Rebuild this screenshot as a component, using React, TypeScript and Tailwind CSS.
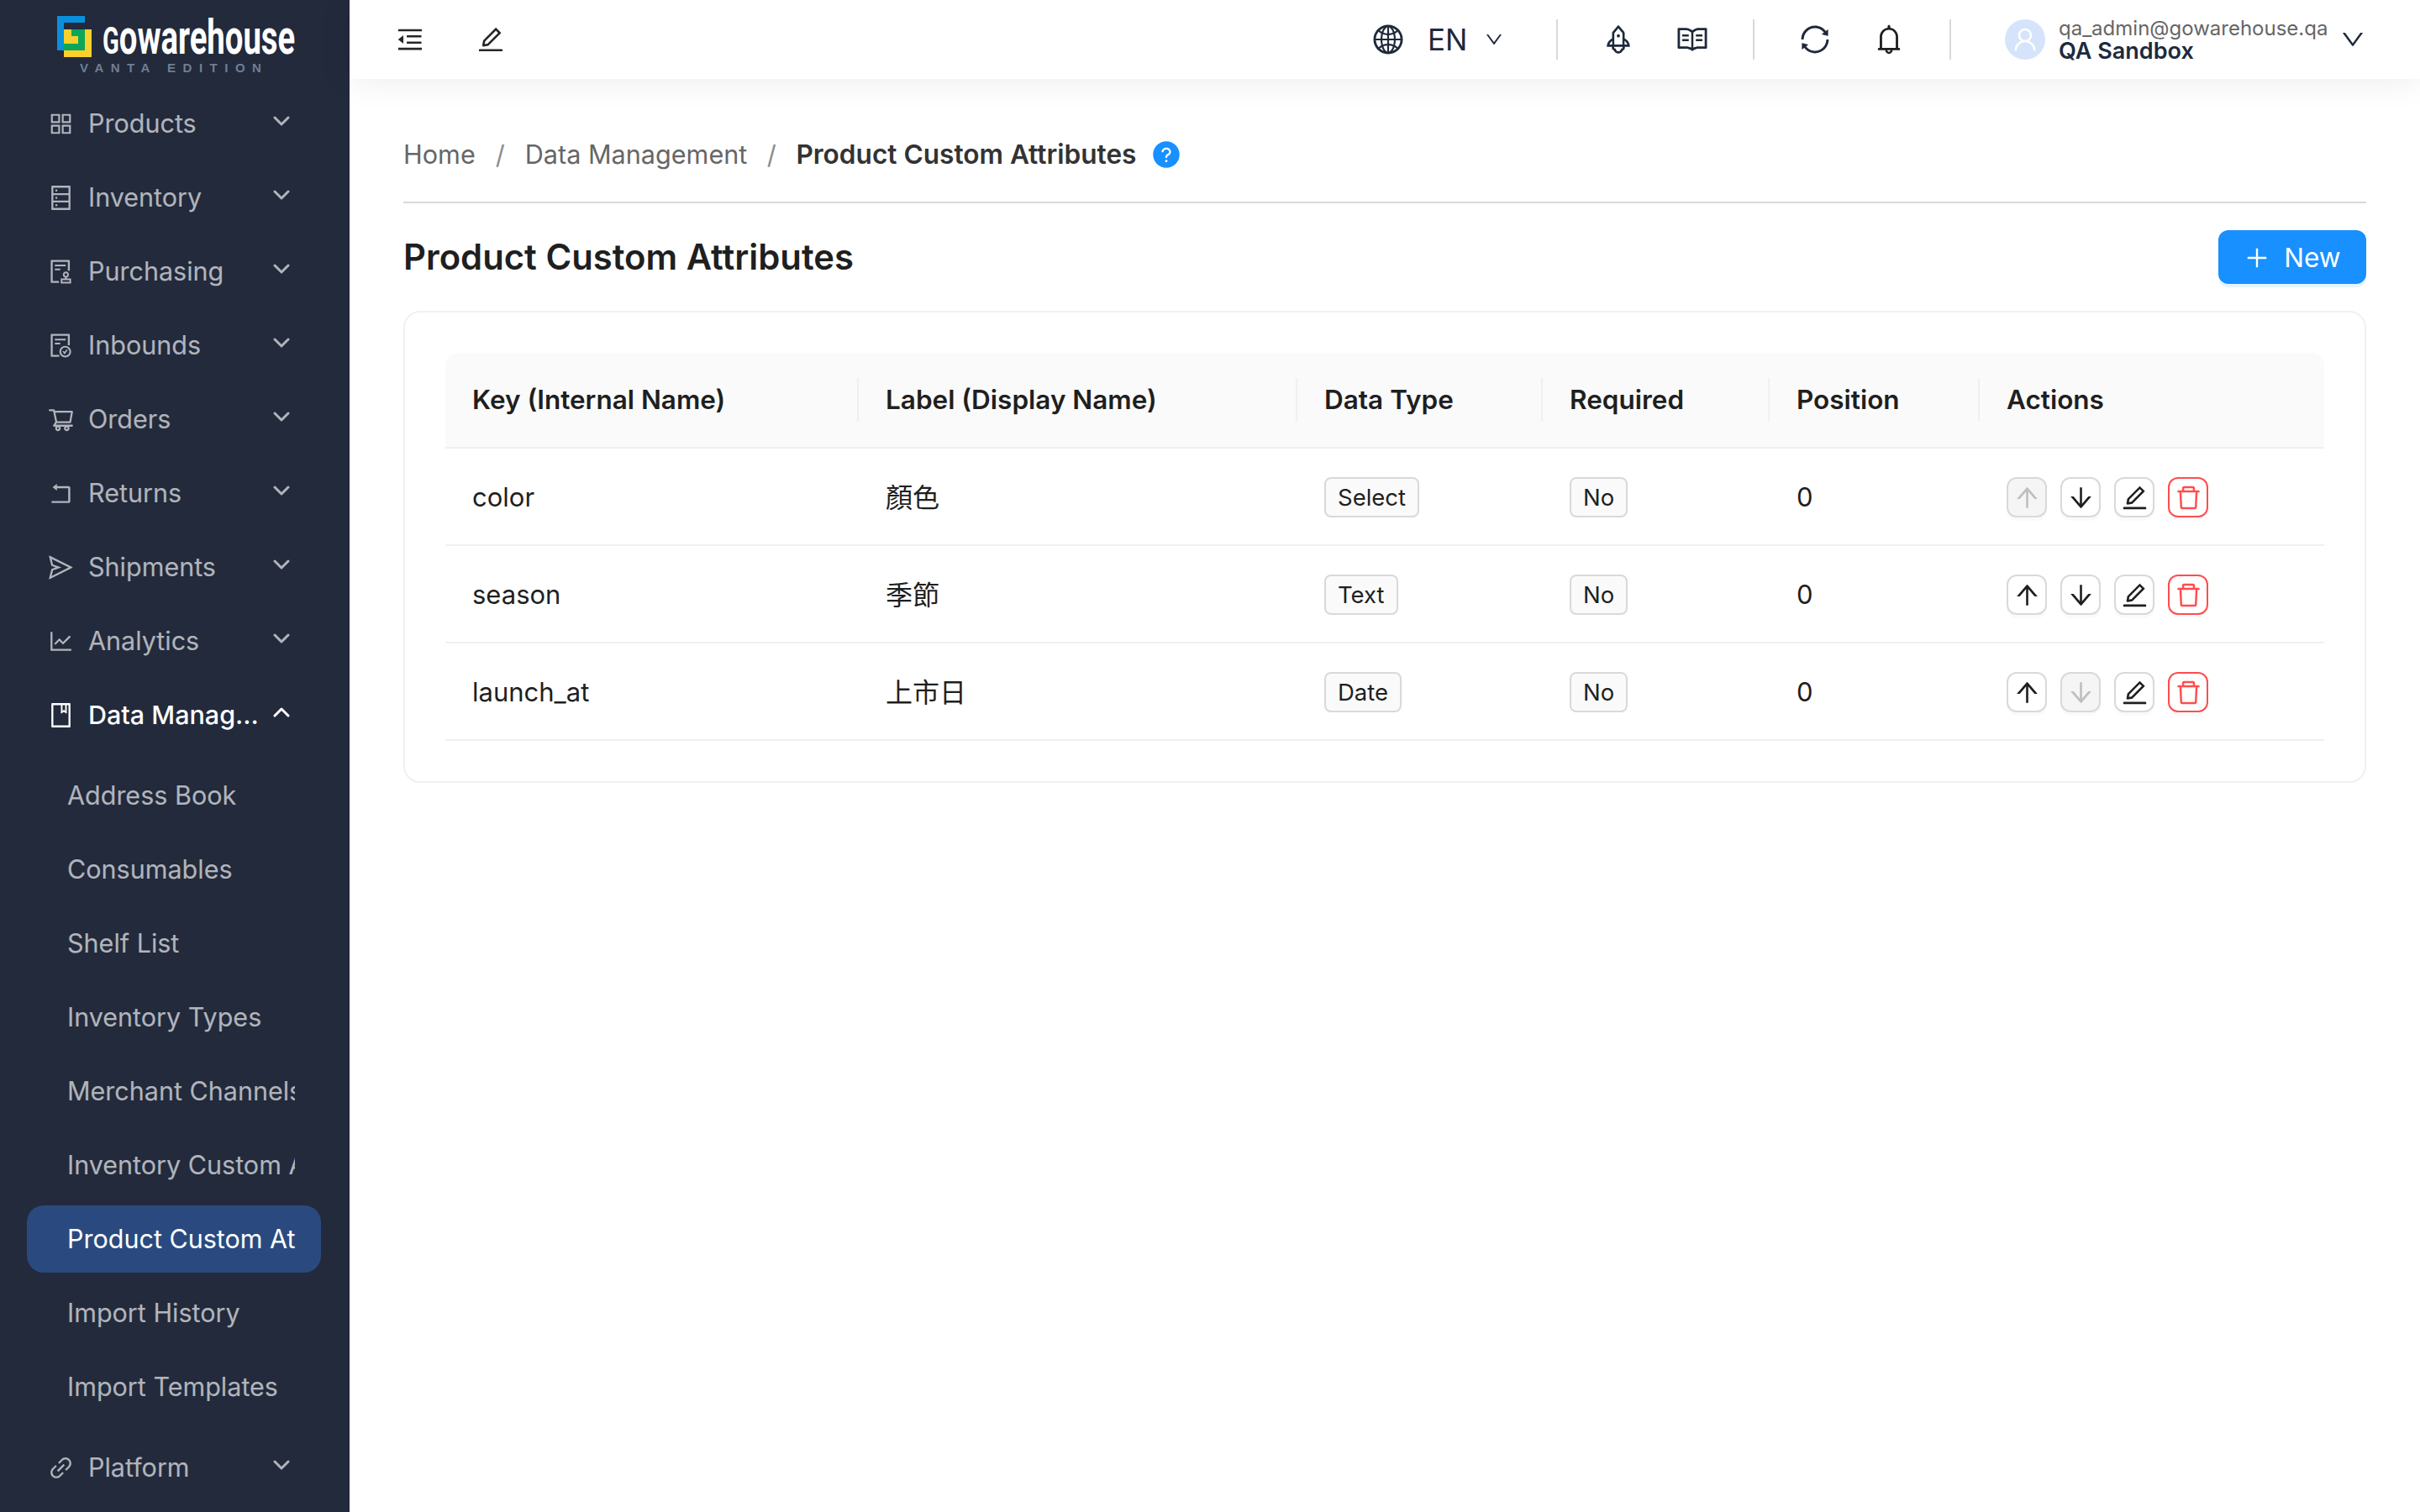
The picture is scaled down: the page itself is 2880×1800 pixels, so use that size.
import type { ReactNode } from "react";
import {
  AiFillQuestionCircle,
  AiOutlineAppstore,
  AiOutlineArrowDown,
  AiOutlineArrowUp,
  AiOutlineAudit,
  AiOutlineBell,
  AiOutlineBook,
  AiOutlineDatabase,
  AiOutlineDelete,
  AiOutlineDown,
  AiOutlineEdit,
  AiOutlineFileDone,
  AiOutlineGlobal,
  AiOutlineLineChart,
  AiOutlineLink,
  AiOutlineMenuFold,
  AiOutlinePlus,
  AiOutlineRead,
  AiOutlineRocket,
  AiOutlineRollback,
  AiOutlineSend,
  AiOutlineShoppingCart,
  AiOutlineSync,
  AiOutlineUser,
} from "react-icons/ai";

function Chevron({ up }: { up?: boolean }) {
  return (
    <svg width="20" height="12" viewBox="0 0 20 12" fill="none" stroke="currentColor" strokeWidth="3" strokeLinecap="round" strokeLinejoin="round" className="shrink-0 -mt-[6px]">
      <path d={up ? "M2 10l8-8 8 8" : "M2 2l8 8 8-8"} />
    </svg>
  );
}

function NavItem({ icon, label }: { icon: ReactNode; label: string }) {
  return (
    <div className="mb-[8px] flex h-[80px] items-center pl-[56px] text-white/65">
      <span className="flex w-[33px] shrink-0 justify-center text-[35px]">{icon}</span>
      <span className="ml-[16px] w-[220px] truncate text-[30.5px]">{label}</span>
      <Chevron />
    </div>
  );
}

function SubItem({ label, active }: { label: string; active?: boolean }) {
  return (
    <div className={`ml-[32px] mr-[34px] mb-[8px] flex h-[80px] items-center rounded-[20px] pl-[48px] text-[30.5px] ${active ? "bg-[#2a4a7f] text-white" : "text-white/65"}`}>
      <span className="w-[271px] overflow-hidden whitespace-nowrap">{label}</span>
    </div>
  );
}

function Sidebar() {
  return (
    <aside className="h-full w-[416px] shrink-0 overflow-hidden bg-[#222a3c]">
      <div className="h-[107px] pl-[68px] pt-[19px]">
        <div className="flex h-[50px] items-end">
          <svg width="41" height="50" viewBox="0 0 41 50" className="shrink-0">
            <path d="M0 0H33V8H8V41H0Z" fill="#0a8fdc" />
            <rect x="8" y="16" width="33" height="33" fill="#fcd02c" />
            <path d="M17 16H33V41H8V33H25V24H17Z" fill="#0ba65a" />
          </svg>
          <div className="ml-[13px] h-[48px] w-[226px]">
            <div className="h-[48px] origin-left scale-x-[0.66] whitespace-nowrap font-['Roboto',sans-serif] text-[58px] font-bold leading-[46px] text-white">
              <span className="text-[44px]">G</span>owarehouse
            </div>
          </div>
        </div>
        <div className="ml-[27px] mt-[5px] whitespace-nowrap font-['Liberation_Sans',sans-serif] text-[15px] font-bold leading-[14px] tracking-[8.5px] text-[#6f7e93]">
          VANTA EDITION
        </div>
      </div>
      <NavItem icon={<AiOutlineAppstore />} label="Products" />
      <NavItem icon={<AiOutlineDatabase />} label="Inventory" />
      <NavItem icon={<AiOutlineAudit />} label="Purchasing" />
      <NavItem icon={<AiOutlineFileDone />} label="Inbounds" />
      <NavItem icon={<AiOutlineShoppingCart />} label="Orders" />
      <NavItem icon={<AiOutlineRollback />} label="Returns" />
      <NavItem icon={<AiOutlineSend />} label="Shipments" />
      <NavItem icon={<AiOutlineLineChart />} label="Analytics" />
      <div className="mb-[16px] flex h-[80px] items-center pl-[56px] text-white">
        <span className="flex w-[33px] shrink-0 justify-center text-[35px]"><AiOutlineBook /></span>
        <span className="ml-[16px] w-[204px] truncate text-[30.5px] font-medium">Data Management</span>
        <span className="ml-[16px]"><Chevron up /></span>
      </div>
      <SubItem label="Address Book" />
      <SubItem label="Consumables" />
      <SubItem label="Shelf List" />
      <SubItem label="Inventory Types" />
      <SubItem label="Merchant Channels" />
      <SubItem label="Inventory Custom Attributes" />
      <SubItem label="Product Custom Attributes" active />
      <SubItem label="Import History" />
      <SubItem label="Import Templates" />
      <div className="h-[8px]" />
      <NavItem icon={<AiOutlineLink />} label="Platform" />
    </aside>
  );
}

function Divider({ className }: { className: string }) {
  return <div className={`h-[48px] w-[2px] shrink-0 bg-[#d9d9d9] ${className}`} />;
}

function Topbar() {
  return (
    <header className="relative z-10 flex h-[94px] shrink-0 items-center bg-white pl-[54px] pr-[64px] shadow-[0_2px_40px_rgba(0,0,0,0.08)]">
      <AiOutlineMenuFold className="text-[36px] text-[#262626]" />
      <AiOutlineEdit className="ml-[60px] text-[36px] text-[#262626]" />
      <div className="ml-auto flex items-center text-[#1e293b]">
        <AiOutlineGlobal className="text-[40px]" />
        <span className="ml-[27px] w-[44px] text-[35px] leading-none">EN</span>
        <AiOutlineDown className="ml-[23px] text-[24px]" />
        <Divider className="ml-[62px]" />
        <AiOutlineRocket className="ml-[52px] text-[40px]" />
        <AiOutlineRead className="ml-[48px] text-[40px]" />
        <Divider className="ml-[52px]" />
        <AiOutlineSync className="ml-[52px] text-[40px]" />
        <AiOutlineBell className="ml-[48px] text-[40px] text-[#1f1f1f]" />
        <Divider className="ml-[52px]" />
        <div className="ml-[64px] flex h-[48px] w-[48px] items-center justify-center rounded-full bg-[#d6e4fb] text-[34px] text-white">
          <AiOutlineUser />
        </div>
        <div className="ml-[16px] w-[317px]">
          <div className="whitespace-nowrap text-[24px] leading-[26px] text-[#666666]">qa_admin@gowarehouse.qa</div>
          <div className="mt-[1px] whitespace-nowrap text-[27px] font-semibold leading-[26px] text-[#1c2a40]">QA Sandbox</div>
        </div>
        <AiOutlineDown className="ml-[17px] text-[32px]" />
      </div>
    </header>
  );
}

function Tag({ children }: { children: ReactNode }) {
  return (
    <span className="inline-flex h-[48px] items-center rounded-[8px] border-2 border-[#d9d9d9] bg-[#fafafa] px-[14px] text-[27.5px]">
      {children}
    </span>
  );
}

function ActionButton({ children, disabled, danger }: { children: ReactNode; disabled?: boolean; danger?: boolean }) {
  const tone = danger
    ? "border-[#ff4d4f] bg-white text-[#ff4d4f]"
    : disabled
      ? "border-[#d9d9d9] bg-[#f5f5f5] text-[#bfbfbf]"
      : "border-[#d9d9d9] bg-white text-[#1f1f1f]";
  return (
    <button className={`flex h-[48px] w-[48px] items-center justify-center rounded-[12px] border-2 text-[35px] shadow-[0_4px_0_rgba(0,0,0,0.02)] ${tone}`}>
      {children}
    </button>
  );
}

const rows = [
  { key: "color", label: "顏色", type: "Select", upOff: true, downOff: false },
  { key: "season", label: "季節", type: "Text", upOff: false, downOff: false },
  { key: "launch_at", label: "上市日", type: "Date", upOff: false, downOff: true },
];

const columns = [
  { title: "Key (Internal Name)", width: "w-[492px]" },
  { title: "Label (Display Name)", width: "w-[522px]" },
  { title: "Data Type", width: "w-[292px]" },
  { title: "Required", width: "w-[270px]" },
  { title: "Position", width: "w-[250px]" },
  { title: "Actions", width: "w-[410px]" },
];

function AttributesTable() {
  return (
    <table className="w-full table-fixed border-separate border-spacing-0 text-[31px] text-[#1f1f1f]">
      <thead>
        <tr>
          {columns.map((col, i) => (
            <th
              key={col.title}
              className={`relative h-[114px] border-b-2 border-[#f0f0f0] bg-[#fafafa] px-[32px] text-left text-[31.5px] font-semibold ${col.width} ${i === 0 ? "rounded-tl-[16px]" : ""} ${i === 5 ? "rounded-tr-[16px]" : ""}`}
            >
              {col.title}
              {i < 5 && <span className="absolute right-0 top-[30px] h-[52px] w-[2px] bg-[#f0f0f0]" />}
            </th>
          ))}
        </tr>
      </thead>
      <tbody>
        {rows.map((row) => (
          <tr key={row.key}>
            <td className="h-[116px] border-b-2 border-[#f0f0f0] px-[32px] pt-[3px]">{row.key}</td>
            <td className="border-b-2 border-[#f0f0f0] px-[32px] pt-[3px] text-[32px]">{row.label}</td>
            <td className="border-b-2 border-[#f0f0f0] px-[32px] pt-[2px]"><Tag>{row.type}</Tag></td>
            <td className="border-b-2 border-[#f0f0f0] px-[32px] pt-[2px]"><Tag>No</Tag></td>
            <td className="border-b-2 border-[#f0f0f0] px-[32px] pt-[3px]">0</td>
            <td className="border-b-2 border-[#f0f0f0] px-[32px] pt-[2px]">
              <div className="flex gap-[16px]">
                <ActionButton disabled={row.upOff}><AiOutlineArrowUp /></ActionButton>
                <ActionButton disabled={row.downOff}><AiOutlineArrowDown /></ActionButton>
                <ActionButton><AiOutlineEdit /></ActionButton>
                <ActionButton danger><AiOutlineDelete /></ActionButton>
              </div>
            </td>
          </tr>
        ))}
      </tbody>
    </table>
  );
}

export default function App() {
  return (
    <div className="flex h-screen w-full overflow-hidden bg-white font-['Inter','Noto_Sans_CJK_TC',sans-serif]">
      <Sidebar />
      <div className="flex min-w-0 flex-1 flex-col">
        <Topbar />
        <main className="flex-1 px-[64px] pt-[66px]">
          <div className="flex h-[48px] items-center text-[30.6px] text-[#666666]">
            <span>Home</span>
            <span className="mx-[24px] text-[#8c8c8c]">/</span>
            <span>Data Management</span>
            <span className="mx-[23.5px] text-[#8c8c8c]">/</span>
            <span className="text-[31.6px] font-semibold text-[#333333]">Product Custom Attributes</span>
            <AiFillQuestionCircle className="ml-[18px] text-[36px] text-[#1890ff]" />
          </div>
          <div className="mt-[32px] h-[2px] bg-[#d9d9d9]" />
          <div className="mt-[32px] flex h-[64px] items-center justify-between">
            <h1 className="text-[41.8px] font-semibold text-[#1f1f1f]">Product Custom Attributes</h1>
            <button className="flex h-[64px] w-[176px] items-center justify-center gap-[16px] rounded-[12px] bg-[#1890ff] pt-[1px] text-[31.5px] text-white shadow-[0_4px_0_rgba(5,145,255,0.1)]">
              <AiOutlinePlus className="text-[32px]" />
              New
            </button>
          </div>
          <section className="mt-[32px] rounded-[20px] border-2 border-[#f0f0f0] p-[48px]">
            <AttributesTable />
          </section>
        </main>
      </div>
    </div>
  );
}
